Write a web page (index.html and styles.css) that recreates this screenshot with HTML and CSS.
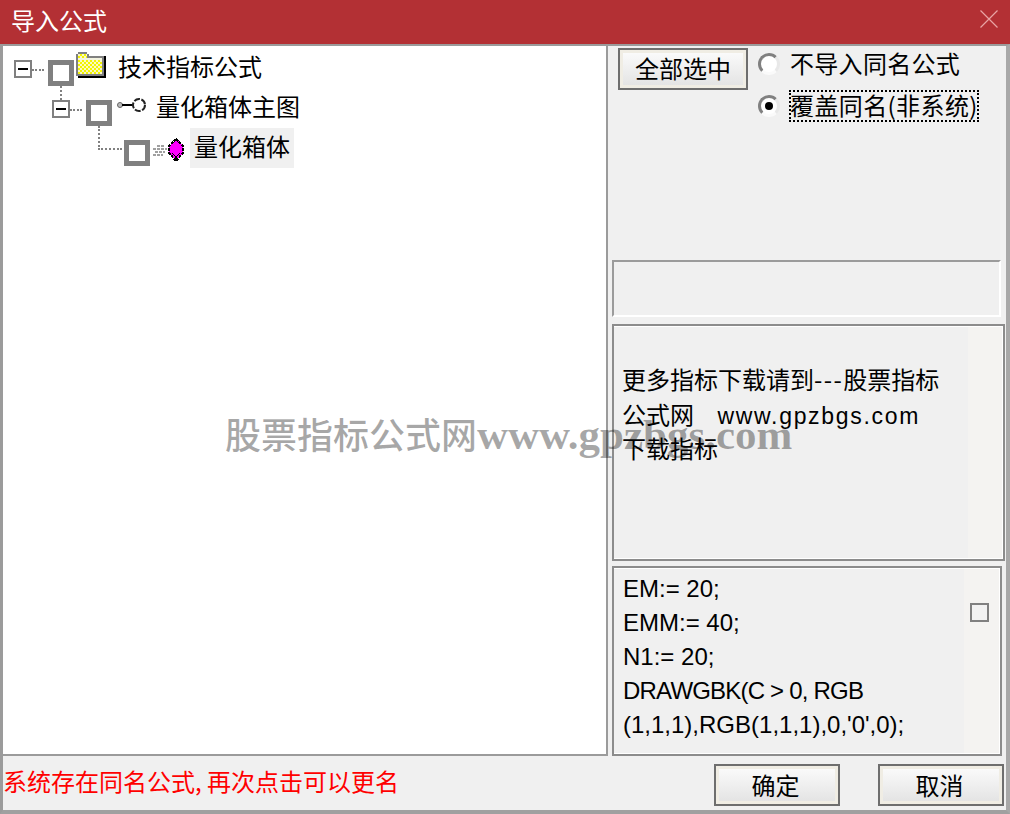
FILE: index.html
```html
<!DOCTYPE html>
<html lang="zh">
<head>
<meta charset="utf-8">
<title>导入公式</title>
<link rel="stylesheet" href="styles.css">
</head>
<body>
<div class="window">
  <header class="titlebar">
    <span class="title">导入公式</span>
    <svg class="close" width="18" height="18" viewBox="0 0 18 18"><path d="M0.5 0.5L17.5 17.5M17.5 0.5L0.5 17.5" stroke="#e8a4a4" stroke-width="1.2" fill="none"/></svg>
  </header>
  <div class="client">
    <div class="left">
      <div class="tree">
        <div class="row row-1">
          <span class="expander"></span><span class="hdots"></span><span class="check"></span>
          <svg class="icon folder" width="30" height="26" viewBox="0 0 30 26" shape-rendering="crispEdges">
            <defs>
              <pattern id="dither" width="4" height="4" patternUnits="userSpaceOnUse">
                <rect width="4" height="4" fill="#f4f400"/>
                <rect width="2" height="2" fill="#f8f8c8"/>
                <rect x="2" y="2" width="2" height="2" fill="#f8f8c8"/>
              </pattern>
            </defs>
            <path d="M0 6V2H2V0H11V2H13V4H28V24H0Z" fill="#808080"/>
            <path d="M2 6V2H11V6H26V22H2Z" fill="url(#dither)"/>
            <path d="M2 6H26V8H2Z" fill="#f4f4e0"/>
            <path d="M28 4H30V26H2V24H28Z" fill="#000"/>
          </svg>
          <span class="label">技术指标公式</span>
          <span class="vdots vdots-1"></span>
        </div>
        <div class="row row-2">
          <span class="expander"></span><span class="hdots"></span><span class="check"></span>
          <svg class="icon key" width="32" height="16" viewBox="0 0 32 16">
            <circle cx="5" cy="8" r="2.5" fill="#bbb" stroke="#666"/>
            <path d="M7 8H18" stroke="#000" stroke-width="2"/>
            <circle cx="24" cy="8" r="6" fill="#fff" stroke="#222" stroke-width="2" stroke-dasharray="6 1.5"/>
          </svg>
          <span class="label">量化箱体主图</span>
          <span class="vdots vdots-2"></span>
          <span class="hook"></span>
        </div>
        <div class="row row-3">
          <span class="check"></span>
          <svg class="icon gem" width="32" height="24" viewBox="0 0 32 24" shape-rendering="crispEdges">
            <path d="M4 8H12M0 11H14M2 14H12M0 17H10" stroke="#a0a0a0" stroke-width="1.4" stroke-dasharray="3 1"/>
            <path d="M23 1L30 8V15L23 23L16 15V8Z" fill="#f0f" stroke="#000" stroke-width="2" stroke-dasharray="3 1"/>
            <path d="M19 15L23 19L27 15M23 19V22" stroke="#000" stroke-width="1.2" fill="none"/>
          </svg>
          <span class="label selected">量化箱体</span>
        </div>
      </div>
      <div class="status">系统存在同名公式, 再次点击可以更名</div>
    </div>
    <div class="right">
      <div class="options">
        <button class="btn btn-all" type="button">全部选中</button>
        <div class="radios">
          <label class="radio"><span class="dot"></span><span class="radio-text">不导入同名公式</span></label>
          <label class="radio"><span class="dot on"></span><span class="radio-text focus">覆盖同名(非系统)</span></label>
        </div>
      </div>
      <div class="groupbox"></div>
      <div class="panel panel-info">
        <div class="panel-text">更多指标下载请到<span class="dashes">---</span>股票指标<br>公式网 <span class="url">www.gpzbgs.com</span><br>下载指标</div>
        <div class="panel-side"></div>
      </div>
      <div class="panel panel-code">
        <div class="panel-text code">EM:= 20;<br>EMM:= 40;<br>N1:= 20;<br><span class="tight">DRAWGBK(C &gt; 0, RGB</span><br>(1,1,1),RGB(1,1,1),0,'0',0);</div>
        <div class="panel-side"><span class="small-check"></span></div>
      </div>
      <div class="actions">
        <button class="btn btn-action" type="button">确定</button>
        <button class="btn btn-action" type="button">取消</button>
      </div>
    </div>
  </div>
  <div class="watermark">股票指标公式网<span class="wm-latin">www.gpzbgs.com</span></div>
</div>
</body>
</html>
```

FILE: styles.css
```css
* { box-sizing: border-box; }
html, body { margin: 0; padding: 0; }
body {
  width: 1010px;
  height: 814px;
  overflow: hidden;
  font-family: "Noto Sans CJK SC", "Liberation Sans", sans-serif;
  font-size: 24px;
  color: #000;
}
.window {
  position: relative;
  width: 1010px;
  height: 814px;
  display: flex;
  flex-direction: column;
  background: #f0f0f0;
}
.titlebar {
  height: 44px;
  flex: none;
  background: #b33034;
  display: flex;
  align-items: center;
  justify-content: space-between;
  padding: 0 12px 0 11px;
  color: #fff;
}
.title { font-size: 24px; line-height: 40px; height: 44px; }
.close { display: block; margin-bottom: 6px; }
.client {
  flex: 1;
  display: flex;
  border-top: 2px solid #9b9b9b;
  border-left: 3px solid #9b9b9b;
  border-right: 4px solid #a8a8a8;
  border-bottom: 4px solid #a0a0a0;
  min-height: 0;
}
.left { width: 605px; flex: none; display: flex; flex-direction: column; }
.tree {
  height: 710px;
  flex: none;
  background: #fff;
  border-right: 2px solid #9b9b9b;
  border-bottom: 2px solid #9b9b9b;
  padding-top: 2px;
}
.row {
  position: relative;
  height: 40px;
  display: flex;
  align-items: flex-start;
}
.row-1 { padding-left: 11px; }
.row-2 { padding-left: 49px; }
.row-3 { padding-left: 121px; }
.expander {
  width: 18px;
  height: 18px;
  margin-top: 12px;
  border: 2px solid #808080;
  background: #fff;
  position: relative;
  flex: none;
}
.expander::after {
  content: "";
  position: absolute;
  left: 2px;
  top: 6px;
  width: 10px;
  height: 2px;
  background: #000;
}
.hdots {
  width: 12px;
  margin: 21px 4px 0 0;
  border-top: 2px dotted #808080;
  flex: none;
}
.check {
  width: 26px;
  height: 26px;
  margin-top: 12px;
  border: 5px solid #808080;
  background: #fff;
  flex: none;
}
.icon { flex: none; display: block; }
.folder { margin: 4px 0 0 2px; }
.key { margin: 9px 0 0 3px; }
.gem { margin: 10px 0 0 3px; }
.label {
  line-height: 36px;
  height: 40px;
  margin-left: 12px;
  white-space: nowrap;
}
.row-2 .label { margin-left: 9px; }
.row-3 .label { margin-left: 5px; }
.selected { background: #f0f0f0; padding: 0 4px; }
.vdots { position: absolute; border-left: 2px dotted #808080; }
.vdots-1 { left: 57px; top: 38px; height: 14px; }
.vdots-2 { left: 95px; top: 38px; height: 24px; }
.hook {
  position: absolute;
  left: 95px;
  top: 60px;
  width: 24px;
  border-top: 2px dotted #808080;
}
.status {
  flex: 1;
  color: #f00;
  line-height: 50px;
  white-space: nowrap;
}
.right { flex: 1; display: flex; flex-direction: column; padding-left: 2px; min-width: 0; }
.options {
  height: 214px;
  flex: none;
  display: flex;
  align-items: flex-start;
  padding: 2px 0 0 8px;
}
.btn {
  font: inherit;
  color: #000;
  border: 2px solid #6e6e6e;
  padding: 0 0 4px;
  background: linear-gradient(#fcfcfc, #e2e2e2);
  box-shadow: inset 0 0 0 3px #f0ede4;
  display: block;
}
.btn-all { width: 130px; height: 42px; flex: none; }
.radios {
  margin-left: 10px;
  display: flex;
  flex-direction: column;
  gap: 9px;
  margin-top: -2px;
}
.radio {
  display: flex;
  align-items: center;
  height: 30px;
  margin-top: 3px;
}
.dot {
  width: 22px;
  height: 22px;
  border-radius: 50%;
  background: #fff;
  border: 3px solid;
  border-color: #808080 #e8e8e8 #fafafa #808080;
  position: relative;
  flex: none;
}
.dot.on::after {
  content: "";
  position: absolute;
  left: 4px;
  top: 4px;
  width: 8px;
  height: 8px;
  border-radius: 50%;
  background: #000;
}
.radio-text { margin-left: 10px; white-space: nowrap; letter-spacing: 0.3px; line-height: 28px; padding-bottom: 2px; }
.focus { margin-left: 10px; letter-spacing: 0.4px; outline: 2px dotted #000; outline-offset: -1px; }
.groupbox {
  height: 57px;
  width: 389px;
  flex: none;
  border: 2px solid #9b9b9b;
  border-right-color: #fff;
  border-bottom-color: #fff;
  margin-left: 2px;
}
.panel {
  flex: none;
  display: flex;
  border: 2px solid #8c8c8c;
  background: #f4f3f1;
  margin-left: 2px;
  box-shadow: inset 0 0 0 1px #fff;
}
.panel-info { width: 393px; height: 237px; margin-top: 7px; }
.panel-code { width: 390px; height: 190px; margin-top: 5px; }
.panel-text {
  background: #f0f0f0;
  margin: 1px 0;
}
.panel-info .panel-text {
  width: 354px;
  padding: 35px 0 0 8px;
  line-height: 34.5px;
}
.dashes { letter-spacing: 1.4px; }
.url {
  margin-left: 18px;
  font-family: "Liberation Sans", sans-serif;
  letter-spacing: 1.7px;
  font-size: 23px;
  line-height: 1;
}
.code {
  width: 350px;
  padding: 3px 0 0 9px;
  line-height: 34px;
  font-family: "Liberation Sans", sans-serif;
  font-size: 24px;
  white-space: nowrap;
}
.tight { letter-spacing: -0.8px; }
.panel-side { flex: 1; padding: 35px 0 0 6px; }
.small-check {
  display: block;
  width: 19px;
  height: 19px;
  border: 2px solid #808080;
  background: #f2f2f2;
}
.actions {
  flex: 1;
  display: flex;
  align-items: flex-start;
  padding: 8px 0 0 104px;
  gap: 38px;
}
.btn-action { width: 126px; height: 42px; flex: none; padding: 0 3px 2px 0; }
.watermark {
  position: absolute;
  left: 225px;
  top: 408px;
  font-family: "Liberation Serif", "Noto Sans CJK SC", serif;
  font-weight: 500;
  font-size: 36px;
  line-height: 54px;
  color: rgba(0, 0, 0, 0.35);
  white-space: nowrap;
  pointer-events: none;
}
.wm-latin { font-size: 43px; font-weight: 700; }
```
